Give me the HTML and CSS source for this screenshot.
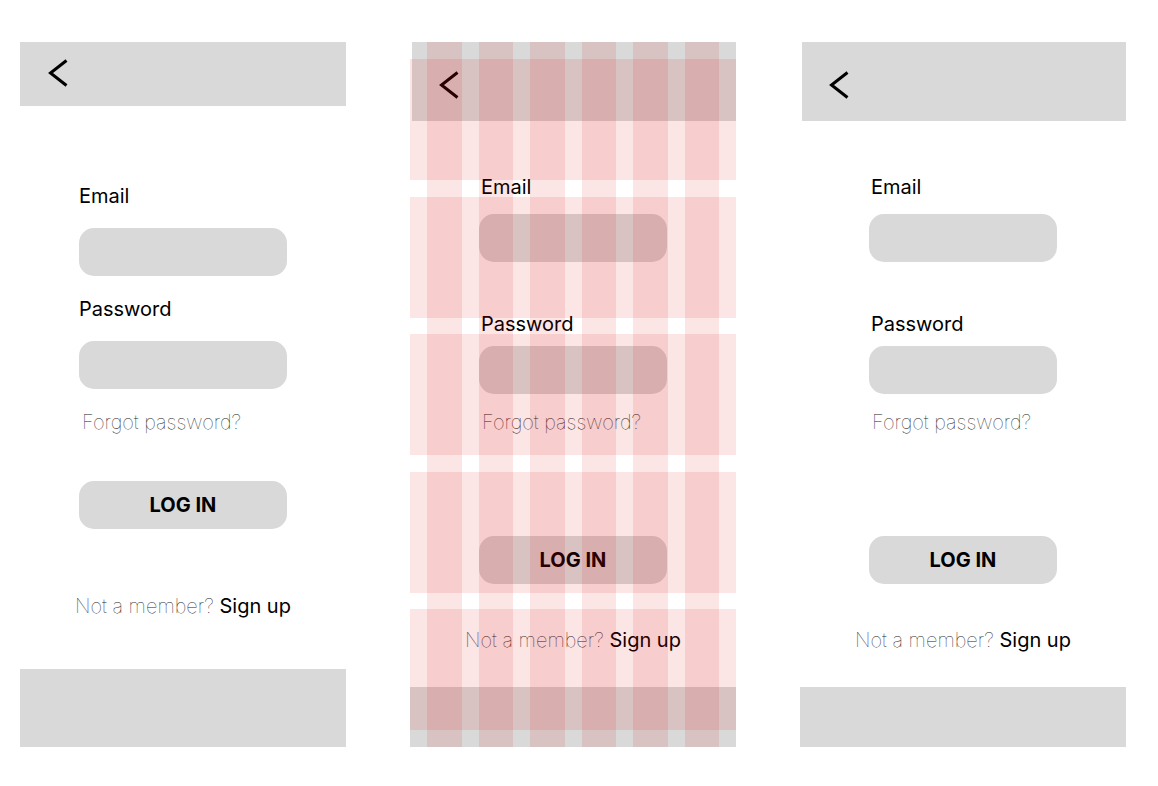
FILE: index.html
```html
<!DOCTYPE html>
<html lang="en">
<head>
    <meta charset="UTF-8">
    <meta name="viewport" content="width=device-width, initial-scale=1.0">
    <title>Login</title>
    <link rel="stylesheet" href="styles.css">
</head>
<body>
    <div class="board">

        <!-- Tela 1 -->
        <div class="screen">
            <div class="screen-header">
                <svg class="back-icon" width="20" height="28" viewBox="0 0 20 28"><path d="M18.5 1.5 L2.5 14 L18.5 26.5" fill="none" stroke="#000" stroke-width="3"/></svg>
            </div>
            <form class="login-form">
                <label for="email1">Email</label>
                <input class="field field-email" type="email" id="email1">
                <label class="label-password" for="senha1">Password</label>
                <input class="field field-password" type="password" id="senha1">
                <a class="forgot" href="#">Forgot password?</a>
                <button class="btn-login" type="button">LOG IN</button>
                <p class="signup">Not a member? <a href="#">Sign up</a></p>
            </form>
            <div class="screen-footer"></div>
        </div>

        <!-- Tela 2, com o grid de layout por cima -->
        <div class="screen screen--alt">
            <div class="screen-header">
                <svg class="back-icon" width="20" height="28" viewBox="0 0 20 28"><path d="M18.5 1.5 L2.5 14 L18.5 26.5" fill="none" stroke="#000" stroke-width="3"/></svg>
            </div>
            <form class="login-form">
                <label for="email2">Email</label>
                <input class="field field-email" type="email" id="email2">
                <label class="label-password" for="senha2">Password</label>
                <input class="field field-password" type="password" id="senha2">
                <a class="forgot" href="#">Forgot password?</a>
                <button class="btn-login" type="button">LOG IN</button>
                <p class="signup">Not a member? <a href="#">Sign up</a></p>
            </form>
            <div class="screen-footer"></div>

            <div class="grid-overlay">
                <div class="grid-cols">
                    <span></span><span></span><span></span><span></span><span></span><span></span>
                </div>
                <div class="grid-rows">
                    <span></span><span></span><span></span><span></span><span></span>
                </div>
            </div>
        </div>

        <!-- Tela 3 -->
        <div class="screen screen--alt">
            <div class="screen-header">
                <svg class="back-icon" width="20" height="28" viewBox="0 0 20 28"><path d="M18.5 1.5 L2.5 14 L18.5 26.5" fill="none" stroke="#000" stroke-width="3"/></svg>
            </div>
            <form class="login-form">
                <label for="email3">Email</label>
                <input class="field field-email" type="email" id="email3">
                <label class="label-password" for="senha3">Password</label>
                <input class="field field-password" type="password" id="senha3">
                <a class="forgot" href="#">Forgot password?</a>
                <button class="btn-login" type="button">LOG IN</button>
                <p class="signup">Not a member? <a href="#">Sign up</a></p>
            </form>
            <div class="screen-footer"></div>
        </div>

    </div>
</body>
</html>
```

FILE: styles.css
```css
/* Reset básico */
* {
    margin: 0;
    padding: 0;
    box-sizing: border-box;
}

body {
    font-family: Inter, "Noto Sans", sans-serif;
    background-color: #ffffff;
    color: #000;
}

/* Quadro com as três telas lado a lado */
.board {
    display: flex;
    gap: 64px;
    padding: 42px 0 0 20px;
}

/* Estilo para cada tela */
.screen {
    position: relative;
    width: 326px;
    height: 705px;
    display: flex;
    flex-direction: column;
    background-color: #ffffff;
}

/* Barra de topo com o botão voltar */
.screen-header {
    height: 64px;
    background-color: #d9d9d9;
    padding: 17px 0 0 28px;
}

.back-icon {
    display: block;
}

/* Rodapé */
.screen-footer {
    margin-top: auto;
    height: 78px;
    background-color: #d9d9d9;
}

/* Formulário de login */
.login-form {
    width: 208px;
    margin: 0 auto;
    padding-top: 78px;
    display: flex;
    flex-direction: column;
}

label {
    display: block;
    font-size: 20px;
    line-height: 24px;
    font-weight: 400;
}

.field {
    display: block;
    width: 100%;
    height: 48px;
    border: none;
    border-radius: 15px;
    background-color: #d9d9d9;
    outline: none;
}

.field-email {
    margin-top: 20px;
}

.label-password {
    margin-top: 21px;
}

.field-password {
    margin-top: 20px;
}

.forgot {
    display: block;
    margin-top: 21px;
    padding-left: 3px;
    font-size: 20px;
    line-height: 24px;
    font-weight: 100;
    color: #1a1a1a;
    text-decoration: none;
}

/* Botão de entrar */
.btn-login {
    margin-top: 47px;
    height: 48px;
    width: 100%;
    border: none;
    border-radius: 15px;
    background-color: #d9d9d9;
    font-family: inherit;
    font-size: 20px;
    font-weight: 700;
    color: #000;
    cursor: pointer;
}

.signup {
    margin: 65px -20px 0;
    text-align: center;
    font-size: 20px;
    line-height: 24px;
    font-weight: 100;
    color: #1a1a1a;
    white-space: nowrap;
}

.signup a {
    font-weight: 400;
    color: #000;
    text-decoration: none;
}

/* Variação das telas 2 e 3 */
.screen--alt .screen-header {
    height: 79px;
    margin-left: 2px;
    padding: 29px 0 0 27px;
}

.screen--alt .screen-footer {
    height: 60px;
}

.screen--alt .login-form {
    width: 188px;
    padding-top: 54px;
}

.screen--alt label {
    padding-left: 2px;
}

.screen--alt .field-email {
    margin-top: 15px;
}

.screen--alt .label-password {
    margin-top: 50px;
}

.screen--alt .field-password {
    margin-top: 10px;
}

.screen--alt .forgot {
    margin-top: 16px;
}

.screen--alt .btn-login {
    margin-top: 102px;
}

.screen--alt .signup {
    margin-top: 44px;
}

/* Grid de layout (colunas e linhas) por cima da tela */
.grid-overlay {
    position: absolute;
    inset: 0;
    pointer-events: none;
}

.grid-cols,
.grid-rows {
    position: absolute;
    inset: 0;
    display: grid;
}

.grid-cols {
    grid-template-columns: repeat(6, 1fr);
    gap: 17px;
    padding: 0 17px;
}

.grid-rows {
    grid-template-rows: repeat(5, 1fr);
    gap: 16.5px;
    padding: 17px 0;
}

.grid-cols span,
.grid-rows span {
    background-color: rgba(215, 0, 0, 0.1);
}
```
